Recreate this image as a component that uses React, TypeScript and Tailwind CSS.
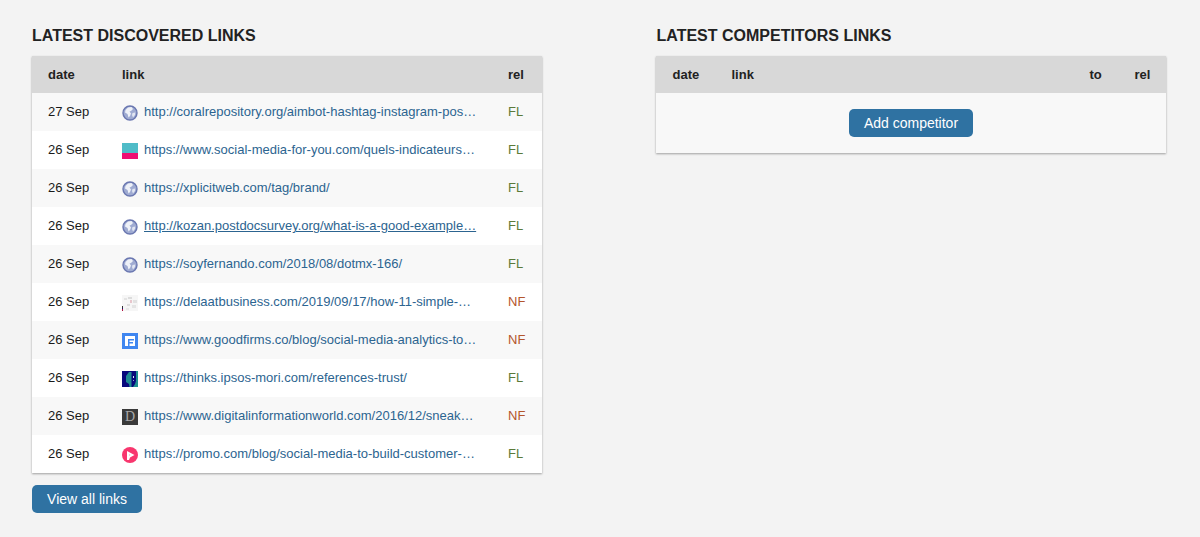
import React from 'react';

type Row = { date: string; url: string; icon: string; rel: 'FL' | 'NF'; underline?: boolean };

const rows: Row[] = [
  { date: '27 Sep', url: 'http://coralrepository.org/aimbot-hashtag-instagram-pos…', icon: 'globe', rel: 'FL' },
  { date: '26 Sep', url: 'https://www.social-media-for-you.com/quels-indicateurs…', icon: 'stripe', rel: 'FL' },
  { date: '26 Sep', url: 'https://xplicitweb.com/tag/brand/', icon: 'globe', rel: 'FL' },
  { date: '26 Sep', url: 'http://kozan.postdocsurvey.org/what-is-a-good-example…', icon: 'globe', rel: 'FL', underline: true },
  { date: '26 Sep', url: 'https://soyfernando.com/2018/08/dotmx-166/', icon: 'globe', rel: 'FL' },
  { date: '26 Sep', url: 'https://delaatbusiness.com/2019/09/17/how-11-simple-…', icon: 'delaat', rel: 'NF' },
  { date: '26 Sep', url: 'https://www.goodfirms.co/blog/social-media-analytics-to…', icon: 'goodfirms', rel: 'NF' },
  { date: '26 Sep', url: 'https://thinks.ipsos-mori.com/references-trust/', icon: 'ipsos', rel: 'FL' },
  { date: '26 Sep', url: 'https://www.digitalinformationworld.com/2016/12/sneak…', icon: 'dig', rel: 'NF' },
  { date: '26 Sep', url: 'https://promo.com/blog/social-media-to-build-customer-…', icon: 'promo', rel: 'FL' },
];

const Favicon = ({ type }: { type: string }) => {
  if (type === 'stripe') {
    return (
      <svg width="16" height="16" viewBox="0 0 16 16" className="shrink-0 mt-[2px]">
        <rect width="16" height="10" fill="#4fbcc8" />
        <rect y="10" width="16" height="6" fill="#ee1073" />
      </svg>
    );
  }
  if (type === 'delaat') {
    return (
      <svg width="16" height="16" viewBox="0 0 16 16" className="shrink-0 mt-[2px]">
        <rect width="16" height="16" fill="#f6f6f6" />
        <rect x="2" y="3" width="3" height="2" fill="#e4e4e4" />
        <rect x="6" y="2" width="4" height="2" fill="#dcdcdc" />
        <rect x="8" y="5" width="2" height="3" fill="#e8c6cc" />
        <rect x="11" y="5" width="4" height="3" fill="#e2e2e2" />
        <rect x="5" y="9" width="3" height="2" fill="#dedede" />
        <rect x="10" y="10" width="4" height="3" fill="#e4e4e4" />
        <rect x="0" y="11" width="1" height="2" fill="#333" />
        <rect x="0" y="13" width="1" height="1" fill="#1a1a70" />
        <rect x="0" y="14" width="1" height="2" fill="#b01040" />
        <rect x="4" y="13" width="3" height="2" fill="#e8e8e8" />
      </svg>
    );
  }
  if (type === 'goodfirms') {
    return (
      <svg width="16" height="16" viewBox="0 0 16 16" className="shrink-0 mt-[2px]">
        <rect width="16" height="16" fill="#3f86f0" />
        <rect x="3" y="3" width="10" height="10" fill="#fff" />
        <path d="M6 6h6v1.500H7.500V9H11v1.500H7.500V13H6z" fill="#3f86f0" />
      </svg>
    );
  }
  if (type === 'ipsos') {
    return (
      <svg width="16" height="16" viewBox="0 0 16 16" className="shrink-0 mt-[2px]">
        <rect width="16" height="16" fill="#08087c" />
        <path d="M7 1h2.500v15H7.500l-.5-3-3-2V5z" fill="#1f8a92" />
        <path d="M14 0h2v16h-5l2-3 1-3z" fill="#1f8f90" />
        <rect x="11" y="5" width="1" height="2" fill="#d8e4ee" />
        <rect x="11" y="9" width="1" height="1" fill="#8fa8c8" />
      </svg>
    );
  }
  if (type === 'dig') {
    return (
      <div className="w-4 h-4 mt-[2px] shrink-0 bg-[#3a3a3a] flex items-center justify-center text-[#a8a8a8] text-[14px] leading-none font-['Liberation_Serif',serif]">
        D
      </div>
    );
  }
  if (type === 'promo') {
    return (
      <svg width="16" height="16" viewBox="0 0 16 16" className="shrink-0 mt-[2px]">
        <circle cx="8" cy="8" r="8" fill="#f8366e" />
        <path d="M5 4 12.500 8 8 10.500 7 13H5z" fill="#fff" />
        <path d="M7 7l1.500 1L7 9z" fill="#fbb4c8" />
      </svg>
    );
  }
  // default globe
  return (
    <svg width="16" height="16" viewBox="0 0 16 16" className="shrink-0 mt-[2px]">
      <circle cx="8" cy="8" r="7" fill="#9fabd2" stroke="#6a77b0" strokeWidth="1.400" />
      <path d="M3.500 5 6 2.500 9.500 2 11 4 9 6 7.500 6.500 9 8.500 8 11 6.500 12.500 5.500 9 3 7.500z" fill="#eef1f8" />
      <path d="M10.500 8 13.200 7.500 13 10 11 12.500 10 10z" fill="#e2e6f2" />
    </svg>
  );
};

const headCls = 'h-[37px] bg-[#d8d8d8] flex items-center text-[13px] font-bold text-[#222]';

const App = () => {
  return (
    <div className="h-[537px] w-[1200px] bg-[#f3f3f3] overflow-hidden pt-6 px-8 flex gap-[114px] font-['Liberation_Sans',Arial,sans-serif]">
      <div className="w-[510px]">
        <h2 className="h-8 pt-px text-base leading-[22px] font-bold text-[#222]">LATEST DISCOVERED LINKS</h2>
        <div className="shadow-[0_1px_2px_rgba(0,0,0,0.35)]">
          <div className={headCls}>
            <div className="w-[90px] pl-4">date</div>
            <div className="flex-1">link</div>
            <div className="w-[34px]">rel</div>
          </div>
          {rows.map((r, i) => (
            <div key={i} className={`h-[38px] flex items-center text-[13px] ${i % 2 === 0 ? 'bg-[#f8f8f8]' : 'bg-white'}`}>
              <div className="w-[90px] pl-4 text-[#1a1a1a]">{r.date}</div>
              <div className="w-[386px] flex items-center gap-[6px] min-w-0">
                <Favicon type={r.icon} />
                <span className={`whitespace-nowrap text-[#2c6490] ${r.underline ? 'underline' : ''}`}>{r.url}</span>
              </div>
              <div className={r.rel === 'FL' ? 'text-[#5b7a3a]' : 'text-[#b4562c]'}>{r.rel}</div>
            </div>
          ))}
        </div>
        <button className="mt-3 h-7 w-[110px] rounded-[5px] bg-[#2f72a2] text-white text-sm">View all links</button>
      </div>

      <div className="w-[510px]">
        <h2 className="h-8 pt-px pl-[0.5px] text-base leading-[22px] font-bold text-[#222]">LATEST COMPETITORS LINKS</h2>
        <div className="shadow-[0_1px_2px_rgba(0,0,0,0.35)]">
          <div className={headCls}>
            <div className="w-[75.500px] pl-[16.500px]">date</div>
            <div className="flex-1">link</div>
            <div className="w-[45px]">to</div>
            <div className="w-[31.500px]">rel</div>
          </div>
          <div className="h-[60px] bg-[#f8f8f8] flex items-center justify-center">
            <button className="h-7 w-[124px] rounded-[5px] bg-[#2f72a2] text-white text-sm">Add competitor</button>
          </div>
        </div>
      </div>
    </div>
  );
};

export default App;
